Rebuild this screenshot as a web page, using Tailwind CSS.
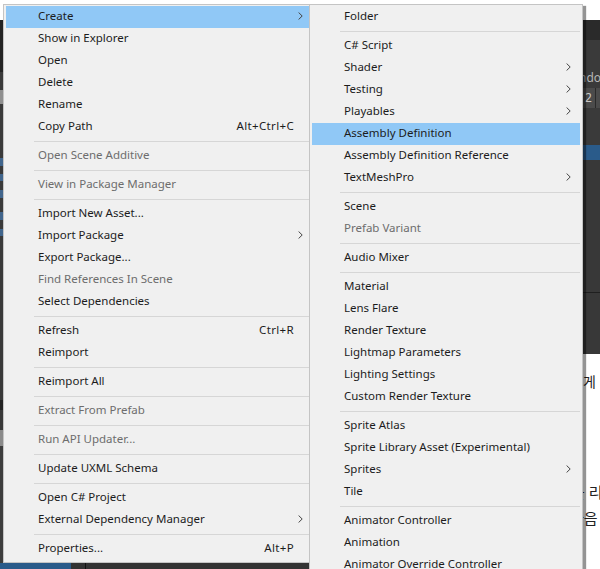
<!DOCTYPE html>
<html lang="en">
<head>
    <meta charset="UTF-8">
    <title>Create Assembly Definition</title>
    <script src="https://cdn.jsdelivr.net/npm/@tailwindcss/browser@4"></script>
</head>
<body class="bg-white overflow-hidden">
    <div class="relative flex w-[600px] h-[569px] overflow-hidden bg-white font-['Noto_Sans','Noto_Sans_CJK_KR',sans-serif] text-[11.5px]">

        <!-- Editor behind the menu, left edge -->
        <div class="flex flex-col w-[3px] shrink-0 overflow-hidden">
            <div class="h-[20px] bg-white"></div>
            <div class="h-[52px] bg-[#232323]"></div>
            <div class="h-[18px] bg-[#3a3a3a]"></div>
            <div class="h-[14px] bg-[#8f8f8f]"></div>
            <div class="h-[54px] bg-[#3a3a3a]"></div>
            <!-- ends of the blue asset names -->
            <div class="h-[8px] bg-[#41658c]"></div>
            <div class="h-[8px] bg-[#3a3a3a]"></div>
            <div class="h-[7px] bg-[#41658c]"></div>
            <div class="h-[9px] bg-[#3a3a3a]"></div>
            <div class="h-[8px] bg-[#41658c]"></div>
            <div class="h-[14px] bg-[#3a3a3a]"></div>
            <div class="h-[8px] bg-[#41658c]"></div>
            <div class="h-[9px] bg-[#3a3a3a]"></div>
            <div class="h-[7px] bg-[#41658c]"></div>
            <div class="h-[14px] bg-[#3a3a3a]"></div>
            <div class="h-[150px] bg-[#393939]"></div>
            <div class="h-[10px] bg-[#222222]"></div>
            <div class="h-[20px] bg-[#393939]"></div>
            <div class="h-[16px] bg-[#8a8a8a]"></div>
            <div class="flex-1 bg-[#3d3d3d]"></div>
        </div>

        <!-- Context menus -->
        <div id="mainMenu" class="relative z-10 w-[306px] h-[559px] mt-[4px] shrink-0 bg-[#f0f0f0] border-t border-l border-b border-[#c4c4c4] pt-[1px] pl-[2px]"></div>
        <div id="subMenu" class="relative z-10 w-[274px] h-[570px] mt-[4px] shrink-0 bg-[#f0f0f0] border-t border-x border-[#c4c4c4] pt-[1px] px-[2px] shadow-[3px_2px_1px_rgba(0,0,0,0.42)]"></div>

        <!-- Editor and document behind the menu, right edge -->
        <div class="flex flex-col flex-1 min-w-0 overflow-hidden text-[#222222]">
            <div class="h-[20px] bg-white"></div>
            <div class="h-[20px] bg-[#2a2a2a]"></div>
            <div class="flex items-end h-[48px] bg-[#3a3a3a] text-[#b5b5b5] text-[12px] leading-[20px] whitespace-nowrap"><span class="-ml-[4px]">ndo</span></div>
            <div class="flex items-center h-[20px] bg-[#4b4b4b] text-[#c8c8c8] text-[12px] pl-[2px]">
                <span class="w-[10px]">2</span>
                <span class="w-px h-full bg-[#2a2a2a]"></span>
            </div>
            <div class="h-[37px] bg-[#3a3a3a]"></div>
            <div class="h-[15px] bg-[#2a5b8a]"></div>
            <div class="h-[132px] bg-[#383838]"></div>
            <div class="h-px bg-[#1f1f1f]"></div>
            <div class="h-[61px] bg-[#383838]"></div>
            <div class="h-[18px]"></div>
            <div class="h-[20px] leading-[20px] text-[14px] whitespace-nowrap">게</div>
            <div class="h-[90px]"></div>
            <div class="h-[20px] leading-[20px] text-[15px] whitespace-nowrap"><span class="-ml-[12px]">블 리</span></div>
            <div class="h-[6px]"></div>
            <div class="h-[20px] leading-[20px] text-[15px] whitespace-nowrap"><span class="-ml-[13px]">다음</span></div>
        </div>

        <!-- Window under the menu, bottom edge -->
        <div class="absolute left-0 top-[563px] flex w-[309px] h-[6px] bg-[#333333]">
            <div class="w-[71px] bg-[#2a5b8a]"></div>
            <div class="w-[14px]"></div>
            <div class="w-px bg-[#111111]"></div>
        </div>
    </div>

    <script>
        // sep = separator, d = disabled, s = has submenu, h = highlighted, k = shortcut
        const mainItems = [
            { t: 'Create', s: true, h: true },
            { t: 'Show in Explorer' },
            { t: 'Open' },
            { t: 'Delete' },
            { t: 'Rename' },
            { t: 'Copy Path', k: 'Alt+Ctrl+C' },
            { sep: true },
            { t: 'Open Scene Additive', d: true },
            { sep: true },
            { t: 'View in Package Manager', d: true },
            { sep: true },
            { t: 'Import New Asset...' },
            { t: 'Import Package', s: true },
            { t: 'Export Package...' },
            { t: 'Find References In Scene', d: true },
            { t: 'Select Dependencies' },
            { sep: true },
            { t: 'Refresh', k: 'Ctrl+R' },
            { t: 'Reimport' },
            { sep: true },
            { t: 'Reimport All' },
            { sep: true },
            { t: 'Extract From Prefab', d: true },
            { sep: true },
            { t: 'Run API Updater...', d: true },
            { sep: true },
            { t: 'Update UXML Schema' },
            { sep: true },
            { t: 'Open C# Project' },
            { t: 'External Dependency Manager', s: true },
            { sep: true },
            { t: 'Properties...', k: 'Alt+P' }
        ];

        const subItems = [
            { t: 'Folder' },
            { sep: true },
            { t: 'C# Script' },
            { t: 'Shader', s: true },
            { t: 'Testing', s: true },
            { t: 'Playables', s: true },
            { t: 'Assembly Definition', h: true },
            { t: 'Assembly Definition Reference' },
            { t: 'TextMeshPro', s: true },
            { sep: true },
            { t: 'Scene' },
            { t: 'Prefab Variant', d: true },
            { sep: true },
            { t: 'Audio Mixer' },
            { sep: true },
            { t: 'Material' },
            { t: 'Lens Flare' },
            { t: 'Render Texture' },
            { t: 'Lightmap Parameters' },
            { t: 'Lighting Settings' },
            { t: 'Custom Render Texture' },
            { sep: true },
            { t: 'Sprite Atlas' },
            { t: 'Sprite Library Asset (Experimental)' },
            { t: 'Sprites', s: true },
            { t: 'Tile' },
            { sep: true },
            { t: 'Animator Controller' },
            { t: 'Animation' },
            { t: 'Animator Override Controller' }
        ];

        const chevron = `<svg class="w-[5px] h-[8px] text-[#444444]" viewBox="0 0 5 8" fill="none" stroke="currentColor" stroke-width="1"><path d="M0.6 0.5 L4.2 4 L0.6 7.5"/></svg>`;

        function renderMenu(id, items, rowPad) {
            document.getElementById(id).innerHTML = items.map(item => {
                if (item.sep) {
                    return `<div class="flex items-center h-[7px] pl-[28px]"><div class="w-full h-px bg-[#d6d6d6]"></div></div>`;
                }
                const rowColor = item.h ? 'bg-[#90c8f6]' : '';
                const textColor = item.d ? 'text-[#6d6d6d]' : 'text-[#1c1c1c]';
                return `
                    <div class="flex items-center h-[22px] pb-[2px] pl-[32px] ${rowPad} whitespace-nowrap ${rowColor} ${textColor}">
                        <span class="flex-1">${item.t}</span>
                        ${item.k ? `<span class="mr-[9px] tracking-[0.35px]">${item.k}</span>` : ''}
                        ${item.s ? `<span class="flex items-center">${chevron}</span>` : ''}
                    </div>
                `;
            }).join('');
        }

        renderMenu('mainMenu', mainItems, 'pr-[6px]');
        renderMenu('subMenu', subItems, 'pr-[9px]');
    </script>
</body>
</html>
